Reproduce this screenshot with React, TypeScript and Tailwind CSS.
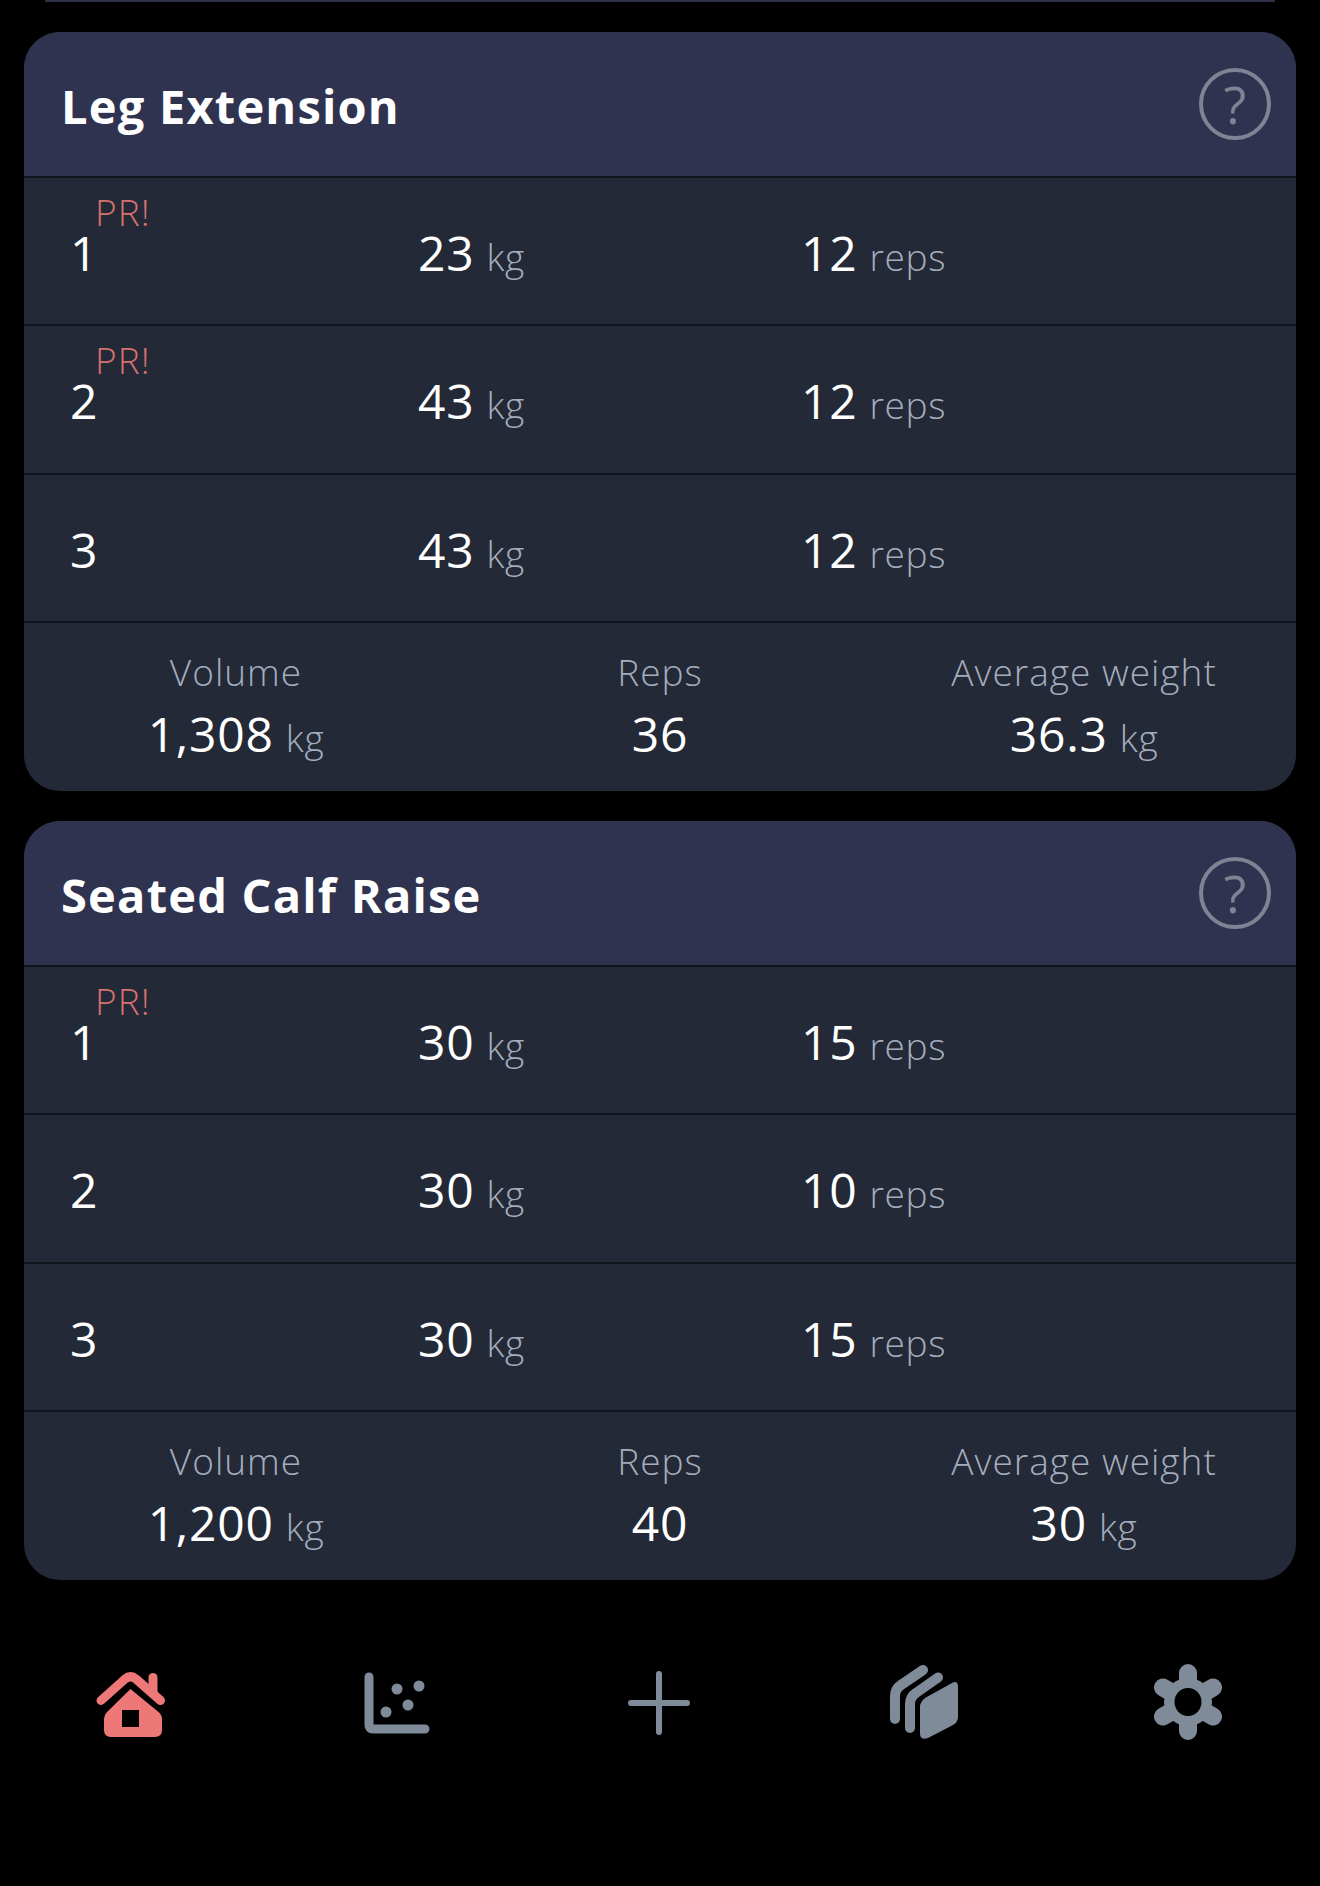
const font = { fontFamily: '"Open Sans", sans-serif' };

type Row = { set: number; kg: number; reps: number; pr?: boolean };
type Ex = { name: string; rows: Row[]; volume: string; total: string; avg: string };

const data: Ex[] = [
  {
    name: "Leg Extension",
    rows: [
      { set: 1, kg: 23, reps: 12, pr: true },
      { set: 2, kg: 43, reps: 12, pr: true },
      { set: 3, kg: 43, reps: 12 },
    ],
    volume: "1,308",
    total: "36",
    avg: "36.3",
  },
  {
    name: "Seated Calf Raise",
    rows: [
      { set: 1, kg: 30, reps: 15, pr: true },
      { set: 2, kg: 30, reps: 10 },
      { set: 3, kg: 30, reps: 15 },
    ],
    volume: "1,200",
    total: "40",
    avg: "30",
  },
];

function Unit({ children }: { children: React.ReactNode }) {
  return <span className="text-[37px] font-[340] tracking-[0.7px] text-[#a3adbe] ml-[12px]">{children}</span>;
}

function Stat({ label, value, unit }: { label: string; value: string; unit?: string }) {
  return (
    <div className="flex flex-col items-center">
      <div className="text-[37px] leading-[48px] tracking-[1px] font-[340] text-[#a3adbe]">{label}</div>
      <div className="text-[48px] leading-[62px] tracking-[0.8px] font-medium mt-[7px] text-white">
        {value}
        {unit && <Unit>{unit}</Unit>}
      </div>
    </div>
  );
}

function Card({ ex }: { ex: Ex }) {
  return (
    <section className="rounded-[36px] overflow-hidden bg-[#232936]">
      <header className="h-[144px] bg-[#2f3350] flex items-center justify-between pl-[37px] pr-[25px] border-b-2 border-[#11141c] box-content">
        <h2 className="text-[47px] font-bold text-white tracking-[1.2px] pt-[4px]">{ex.name}</h2>
        <div className="w-[72px] h-[72px] rounded-full border-[4px] border-[#7f8494] flex items-center justify-center text-[52px] font-medium leading-none text-[#7f8494]">
          ?
        </div>
      </header>
      {ex.rows.map((r) => (
        <div
          key={r.set}
          className="h-[148.4px] pt-[44px] border-b-2 border-[#11141c] grid grid-cols-[348px_383px_1fr] items-baseline pl-[46px] text-[48px] font-medium tracking-[0.8px] text-white"
        >
          <div className="relative leading-[62px]">
            {r.pr && (
              <span className="absolute left-[25px] -top-[34px] text-[37px] leading-[48px] tracking-[1px] font-[340] text-[#d6716f]">
                PR!
              </span>
            )}
            {r.set}
          </div>
          <div className="leading-[62px]">
            {r.kg}
            <Unit>kg</Unit>
          </div>
          <div className="leading-[62px]">
            {r.reps}
            <Unit>reps</Unit>
          </div>
        </div>
      ))}
      <div className="h-[167.8px] pt-[25px] grid grid-cols-3">
        <Stat label="Volume" value={ex.volume} unit="kg" />
        <Stat label="Reps" value={ex.total} />
        <Stat label="Average weight" value={ex.avg} unit="kg" />
      </div>
    </section>
  );
}

const gray = "#808b9a";

function HomeIcon() {
  return (
    <svg width="70" height="67" viewBox="0 0 70 67" className="mt-[1px] -ml-[2px]">
      <path
        d="M34.5 18 L62.5 41 Q66 44 66 48 V59 Q66 66 59 66 H15 Q8 66 8 59 V48 Q8 44 11 41 Z M26 39 H43 V56 H26 Z"
        fill="#ee7878"
        fillRule="evenodd"
      />
      <path
        d="M5 29.5 L29 8 Q34.5 3.5 40 8 L64.5 29.5"
        fill="none"
        stroke="#ee7878"
        strokeWidth="9"
        strokeLinecap="round"
        strokeLinejoin="round"
      />
      <path d="M57 6.5 V22" fill="none" stroke="#ee7878" strokeWidth="9" strokeLinecap="round" />
    </svg>
  );
}

function ScatterIcon() {
  return (
    <svg width="66" height="62" viewBox="0 0 66 62" fill={gray} className="ml-[2px] -mt-[2px]">
      <path d="M5 5 V53 Q5 57 9 57 H61" fill="none" stroke={gray} strokeWidth="9" strokeLinecap="round" />
      <circle cx="22" cy="40" r="5.5" />
      <circle cx="33" cy="17" r="5.5" />
      <circle cx="44" cy="33" r="5.5" />
      <circle cx="55" cy="14" r="5.5" />
    </svg>
  );
}

function PlusIcon() {
  return (
    <svg width="62" height="64" viewBox="0 0 62 64" className="-ml-[2px] -mt-[2px]">
      <path d="M31 3 V61 M3 32 H59" stroke={gray} strokeWidth="6" strokeLinecap="round" />
    </svg>
  );
}

function CardsIcon() {
  return (
    <svg width="68" height="74" viewBox="0 0 68 74" fill="none" className="-mt-[3px] -ml-[1px]">
      <path d="M33 5 L11 20 Q5 24 5 31 V54" stroke={gray} strokeWidth="10" strokeLinecap="round" />
      <path d="M48 12.5 L26 28 Q20 32 20 39 V63" stroke={gray} strokeWidth="10" strokeLinecap="round" />
      <path d="M62 18 Q68 15 68 22 V52 Q68 57 63 60 L38 73 Q30 76 30 68 V42 Q30 37 35 33 Z" fill={gray} />
    </svg>
  );
}

function GearIcon() {
  return (
    <svg width="72" height="76" viewBox="0 0 72 76" className="-mt-[3px] -ml-[1px]">
      <circle cx="36" cy="38" r="24" fill={gray} />
      <path
        d="M36 9 V67 M61 23.5 L11 52.5 M61 52.5 L11 23.5"
        stroke={gray}
        strokeWidth="18"
        strokeLinecap="round"
      />
      <ellipse cx="36" cy="38" rx="13.5" ry="14" fill="#000" />
    </svg>
  );
}

export default function App() {
  return (
    <div className="w-[1320px] h-[1886px] bg-black overflow-hidden" style={font}>
      <div className="h-[2px] mx-[45px] bg-[#2d3046]" />
      <div className="px-[24px] pt-[30px] flex flex-col gap-[30px]">
        {data.map((ex) => (
          <Card key={ex.name} ex={ex} />
        ))}
      </div>
      <nav className="grid grid-cols-5 mt-[86px] h-[76px] items-center justify-items-center">
        <HomeIcon />
        <ScatterIcon />
        <PlusIcon />
        <CardsIcon />
        <GearIcon />
      </nav>
    </div>
  );
}
